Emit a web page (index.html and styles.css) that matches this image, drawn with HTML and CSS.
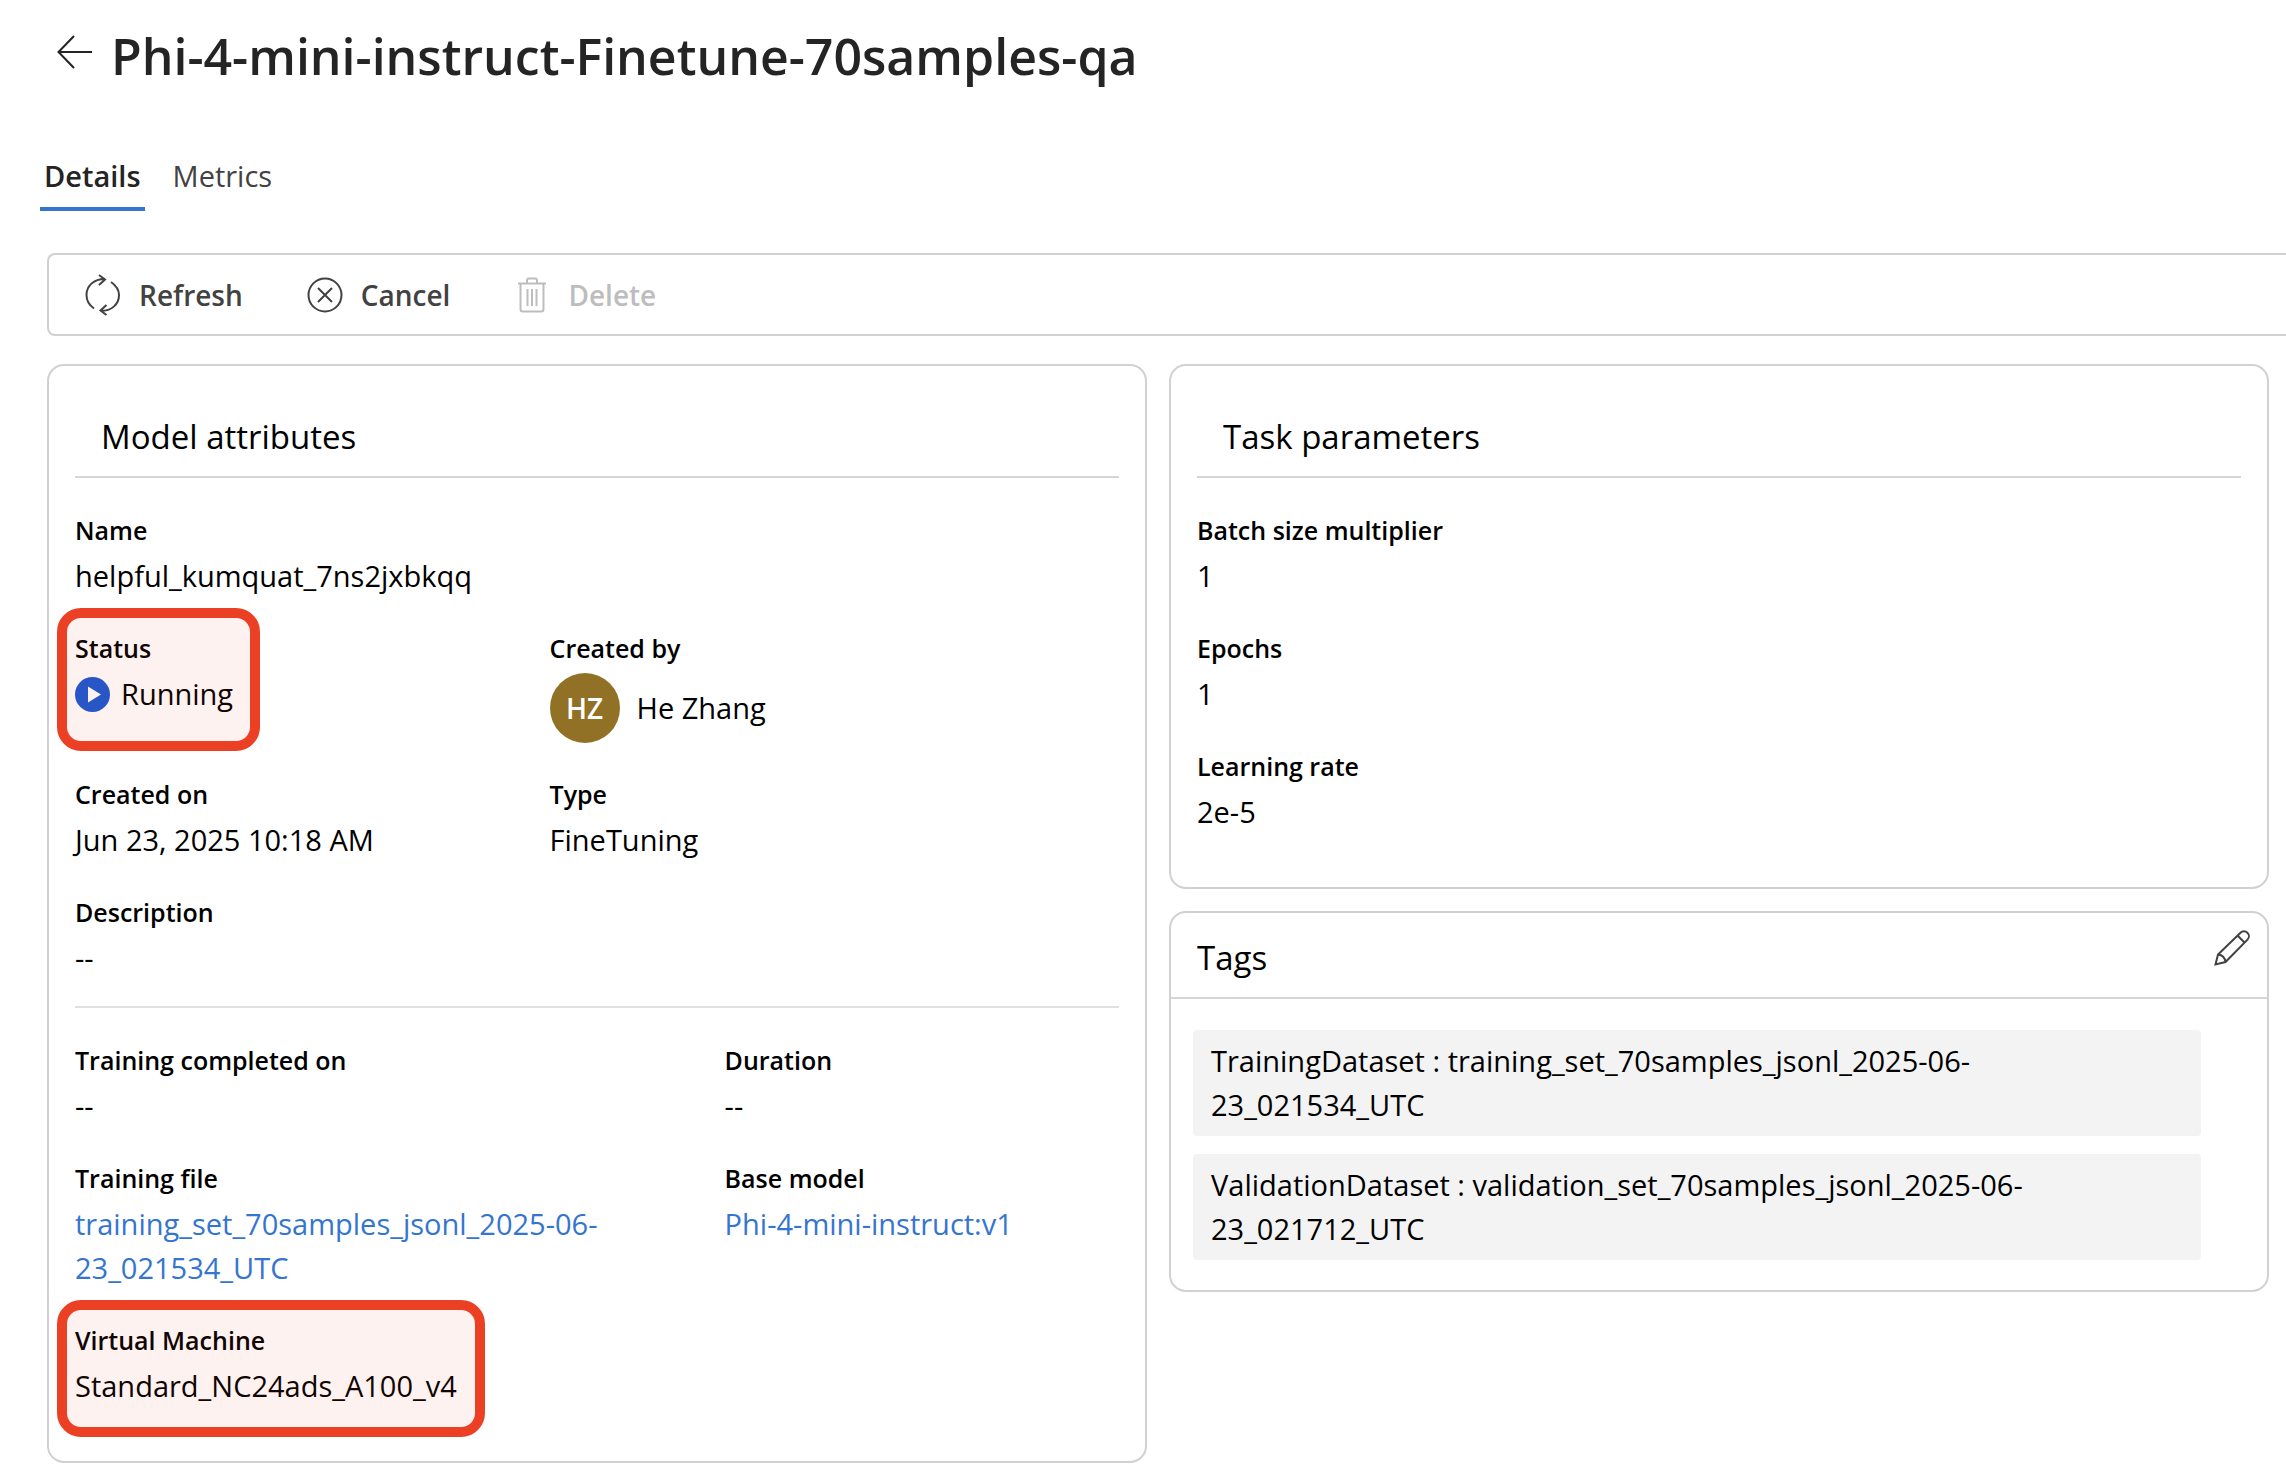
FILE: index.html
```html
<!DOCTYPE html>
<html lang="en">
<head>
<meta charset="utf-8">
<meta name="viewport" content="width=device-width, initial-scale=1">
<title>Phi-4-mini-instruct-Finetune-70samples-qa</title>
<link rel="stylesheet" href="styles.css">
</head>
<body>
<main class="page">
  <header class="page-header">
    <button class="icon-button back" type="button" aria-label="Back">
      <svg width="36" height="34" viewBox="0 0 36 34" fill="none" stroke="currentColor" stroke-width="2"><path d="M17 1 1.500 17 17 33M1.500 17H35"/></svg>
    </button>
    <h1 class="page-title">Phi-4-mini-instruct-Finetune-70samples-qa</h1>
  </header>

  <div class="tabs" role="tablist">
    <button class="tab tab-active" type="button" role="tab" aria-selected="true">Details</button>
    <button class="tab" type="button" role="tab" aria-selected="false">Metrics</button>
  </div>

  <div class="toolbar" role="toolbar">
    <button class="command" type="button">
      <svg width="36" height="42" viewBox="0 0 36 42" fill="none" stroke="currentColor" stroke-width="2"><path d="M9 34.500C4 31 1.500 26 1.500 21C1.500 12 8.500 5 20 5M14 1l6 4.500-6 5.500M26 8c5 3.500 8 8 8 13c0 9-7 16-18.500 16M21.500 31l-6 5.500 6 4.500"/></svg>
      Refresh
    </button>
    <button class="command" type="button">
      <svg width="36" height="36" viewBox="0 0 36 36" fill="none" stroke="currentColor" stroke-width="2"><circle cx="18" cy="18" r="16.500"/><path d="M11 11l14 14M25 11 11 25"/></svg>
      Cancel
    </button>
    <button class="command" type="button" disabled>
      <svg width="36" height="36" viewBox="0 0 36 36" fill="none" stroke="currentColor" stroke-width="2"><path d="M4 6.500h28M13 6V3.500a2 2 0 0 1 2-2h6a2 2 0 0 1 2 2V6M6.500 7v25a2.500 2.500 0 0 0 2.500 2.500h18a2.500 2.500 0 0 0 2.500-2.500V7M13.500 12v17M18 12v17M22.500 12v17"/></svg>
      Delete
    </button>
  </div>

  <div class="cards">
    <section class="card">
      <h2 class="card-title ruled">Model attributes</h2>
      <dl class="fields overview">
        <div class="field full"><dt>Name</dt><dd>helpful_kumquat_7ns2jxbkqq</dd></div>
        <div class="field status">
          <dt>Status</dt>
          <dd class="running">
            <svg width="35" height="35" viewBox="0 0 35 35"><circle cx="17.500" cy="17.500" r="17.500" fill="#1a58d3"/><path d="M13 9.500v16l13-8z" fill="#fff"/></svg>
            Running
          </dd>
        </div>
        <div class="field"><dt>Created by</dt><dd class="person"><span class="avatar">HZ</span>He Zhang</dd></div>
        <div class="field"><dt>Created on</dt><dd>Jun 23, 2025 10:18 AM</dd></div>
        <div class="field"><dt>Type</dt><dd>FineTuning</dd></div>
        <div class="field full"><dt>Description</dt><dd>--</dd></div>
      </dl>
      <hr class="divider">
      <dl class="fields training">
        <div class="field"><dt>Training completed on</dt><dd>--</dd></div>
        <div class="field"><dt>Duration</dt><dd>--</dd></div>
        <div class="field"><dt>Training file</dt><dd><a href="#training-file">training_set_70samples_jsonl_2025-06-<wbr>23_021534_UTC</a></dd></div>
        <div class="field"><dt>Base model</dt><dd><a href="#base-model">Phi-4-mini-instruct:v1</a></dd></div>
        <div class="field machine"><dt>Virtual Machine</dt><dd>Standard_NC24ads_A100_v4</dd></div>
      </dl>
    </section>

    <div class="column">
      <section class="card">
        <h2 class="card-title ruled">Task parameters</h2>
        <dl class="fields">
          <div class="field"><dt>Batch size multiplier</dt><dd>1</dd></div>
          <div class="field"><dt>Epochs</dt><dd>1</dd></div>
          <div class="field"><dt>Learning rate</dt><dd>2e-5</dd></div>
        </dl>
      </section>

      <section class="card tags">
        <div class="tags-header">
          <h2 class="card-title">Tags</h2>
          <button class="icon-button" type="button" aria-label="Edit tags">
            <svg width="36" height="36" viewBox="0 0 36 36" fill="none" stroke="currentColor" stroke-width="2"><path d="M1.500 34.500 4 24.500 26.500 2.800a4.800 4.800 0 0 1 7 6.800L11.500 32zM23.500 5.500l7 7M4 24.500c4 .5 7 3.500 7.500 7.500"/></svg>
          </button>
        </div>
        <ul class="tag-list">
          <li class="tag">TrainingDataset : training_set_70samples_jsonl_2025-06-<wbr>23_021534_UTC</li>
          <li class="tag">ValidationDataset : validation_set_70samples_jsonl_2025-06-<wbr>23_021712_UTC</li>
        </ul>
      </section>
    </div>
  </div>
</main>
</body>
</html>
```
FILE: styles.css
```css
*,
*::after {
  box-sizing: border-box;
}

body {
  margin: 0;
  background: #fff;
  color: #000;
  font: 29px/44px "Open Sans", "Noto Sans", sans-serif;
}

h1, h2, dl, dd, ul {
  margin: 0;
  padding: 0;
}

button {
  border: 0;
  padding: 0;
  background: none;
  color: #424242;
  font: inherit;
}

svg {
  display: block;
  flex: none;
}

.page {
  padding: 20px 0 20px 47px;
}

.page-header {
  display: flex;
  align-items: center;
  gap: 18px;
  padding-left: 10px;
}

.back {
  padding-bottom: 8px;
  color: #242424;
}

.page-title {
  color: #242424;
  font-size: 50px;
  line-height: 72px;
  font-weight: 600;
}

.tabs {
  display: flex;
  gap: 24px;
  margin: 62px 0 0 -7px;
}

.tab {
  padding: 0 4px 9px;
  border-bottom: 4px solid transparent;
}

.tab-active {
  border-bottom-color: #3475d0;
  color: #242424;
  font-weight: 600;
}

.toolbar {
  display: flex;
  align-items: center;
  gap: 64px;
  height: 83px;
  margin-top: 42px;
  padding-left: 36px;
  border: 2px solid #d1d1d1;
  border-right: 0;
  border-radius: 8px 0 0 8px;
}

.command {
  display: flex;
  align-items: center;
  gap: 18px;
  font-size: 28px;
  font-weight: 600;
}

.command:disabled {
  color: #bdbdbd;
}

.cards {
  display: grid;
  grid-template-columns: 1fr 1fr;
  align-items: start;
  gap: 22px;
  margin: 28px 17px 0 0;
}

.column {
  display: grid;
  gap: 22px;
}

.card {
  padding: 0 26px 53px;
  border: 2px solid #d1d1d1;
  border-radius: 17px;
}

.card-title {
  font-size: 33px;
  line-height: 44px;
  font-weight: 400;
}

.ruled {
  padding: 49px 26px 17px;
  border-bottom: 2px solid #d6d6d6;
}

.fields {
  display: grid;
  row-gap: 32px;
  padding-top: 34px;
}

.overview {
  grid-template-columns: 5fr 6fr;
}

.training {
  grid-template-columns: 28fr 17fr;
}

.full {
  grid-column: 1 / -1;
}

.field {
  display: flex;
  flex-direction: column;
  gap: 6px;
}

dt {
  font-size: 25px;
  line-height: 36px;
  font-weight: 600;
}

a {
  color: #3475d0;
  text-decoration: none;
}

.divider {
  height: 2px;
  margin: 26px 0 0;
  border: 0;
  background: #e0e0e0;
}

.running {
  display: flex;
  align-items: center;
  gap: 11px;
}

.person {
  display: flex;
  align-items: center;
  gap: 17px;
  height: 72px;
}

.avatar {
  display: grid;
  place-items: center;
  width: 70px;
  height: 70px;
  border-radius: 50%;
  background: #917126;
  color: #fff;
  font-size: 28px;
  font-weight: 600;
}

/* Callout frames drawn around the highlighted fields */
.status,
.machine {
  position: relative;
}

.status::after,
.machine::after {
  content: "";
  position: absolute;
  top: -22px;
  left: -18px;
  border: 10px solid #ec4025;
  border-radius: 24px;
  background: rgba(236, 64, 37, 0.07);
}

.status::after {
  width: 203px;
  height: 143px;
}

.machine::after {
  width: 428px;
  height: 137px;
}

.tags {
  padding: 0 0 30px;
}

.tags-header {
  display: flex;
  align-items: flex-start;
  justify-content: space-between;
  padding: 17px 17px 17px 26px;
  border-bottom: 2px solid #d6d6d6;
}

.tags-header .card-title {
  padding-top: 6px;
}

.tag-list {
  display: grid;
  gap: 18px;
  padding: 31px 66px 0 22px;
  list-style: none;
}

.tag {
  padding: 9px 44px 9px 18px;
  border-radius: 4px;
  background: #f3f3f3;
}
```
